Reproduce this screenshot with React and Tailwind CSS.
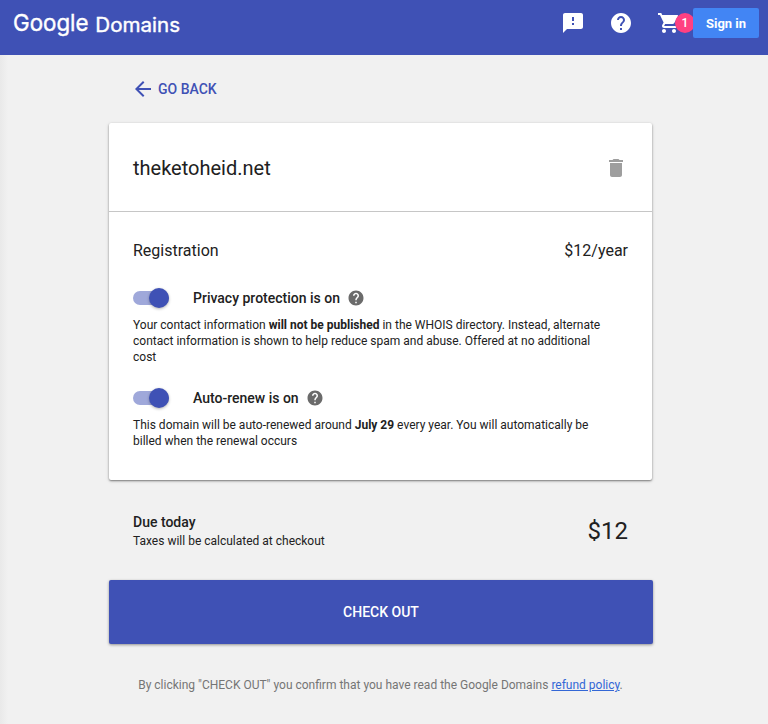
import React from "react";
import { MdArrowBack, MdDelete, MdFeedback, MdHelp, MdShoppingCart } from "react-icons/md";

function Logo() {
  return (
    <svg width="184" height="55" className="block fill-white" aria-label="Google Domains">
      <g fontFamily="Inter, sans-serif" stroke="white" strokeWidth="0.4">
        <text x="13" y="31" fontSize="23.5" textLength="75.5" lengthAdjust="spacingAndGlyphs">Google</text>
        <text x="95.3" y="31.8" fontSize="20" textLength="84.7" lengthAdjust="spacingAndGlyphs">Domains</text>
      </g>
    </svg>
  );
}

function Header() {
  return (
    <header className="flex h-[55px] items-start bg-[#3f51b5] text-white">
      <Logo />
      <div className="ml-auto flex h-[46px] items-center pr-[9px]">
        <MdFeedback size={24} />
        <MdHelp size={24} className="ml-6" />
        <div className="relative ml-6 mr-3 h-6 w-6">
          <MdShoppingCart size={24} />
          <span className="absolute left-[18px] top-[2px] flex h-5 w-5 items-center justify-center rounded-full bg-[#ff4081] text-[12px] font-medium">
            1
          </span>
        </div>
        <button className="relative h-[30px] w-[66px] rounded-[2px] bg-[#4285f4] pt-px text-[13px] font-bold">
          Sign in
        </button>
      </div>
    </header>
  );
}

function Setting({ title, children }) {
  return (
    <section>
      <div className="flex h-5 items-center">
        <div className="flex h-[14px] w-9 items-center justify-end rounded-full bg-[#9fa8da]">
          <span className="h-5 w-5 shrink-0 rounded-full bg-[#3f51b5] shadow-[0_1px_3px_rgba(0,0,0,0.3)]" />
        </div>
        <h2 className="ml-6 text-[14px] font-medium leading-5">{title}</h2>
        <MdHelp size={18} className="ml-[7.5px] text-[#6b6b6b]" />
      </div>
      <p className="mt-[9px] text-[12px] leading-4">{children}</p>
    </section>
  );
}

export default function App() {
  return (
    <div className="h-[724px] w-[768px] overflow-hidden bg-[#f1f1f1] font-[Roboto,sans-serif] text-[#212121]">
      <Header />
      <main className="h-[669px] bg-[linear-gradient(to_right,#e9e9e9,#f1f1f1_8px)] pl-[109px]">
        <div className="flex h-[68px] items-center pl-[22px] text-[#3f51b5]">
          <MdArrowBack size={24} />
          <span className="ml-[3px] text-[14px] font-medium">GO BACK</span>
        </div>

        <div className="h-[357px] w-[543px] rounded-[2px] bg-white shadow-[0_1px_2px_rgba(0,0,0,0.45),0_1px_4px_rgba(0,0,0,0.12)]">
          <div className="flex h-[89px] items-center justify-between border-b border-[#c6c6c6] pl-6 pr-[24px] pt-[2px]">
            <h1 className="text-[20px]">theketoheid.net</h1>
            <MdDelete size={24} className="text-[#9e9e9e]" />
          </div>
          <div className="px-6 pt-[27px]">
            <div className="flex h-6 items-center justify-between text-[16px]">
              <span>Registration</span>
              <span>$12/year</span>
            </div>
            <div className="mt-[25px] flex flex-col gap-[23px]">
              <Setting title="Privacy protection is on">
                Your contact information <b>will not be published</b> in the WHOIS directory. Instead, alternate
                <br />
                contact information is shown to help reduce spam and abuse. Offered at no additional
                <br />
                cost
              </Setting>
              <Setting title="Auto-renew is on">
                This domain will be auto-renewed around <b>July 29</b> every year. You will automatically be
                <br />
                billed when the renewal occurs
              </Setting>
            </div>
          </div>
        </div>

        <div className="flex h-[100px] w-[543px] items-center justify-between px-6 pt-px">
          <div>
            <div className="text-[14px] font-medium leading-5">Due today</div>
            <div className="text-[12px] leading-[18px]">Taxes will be calculated at checkout</div>
          </div>
          <div className="pt-px text-[24px]">$12</div>
        </div>

        <button className="block h-16 w-[544px] rounded-[2px] bg-[#3f51b5] text-[14px] font-medium text-white shadow-[0_1px_3px_rgba(0,0,0,0.4)]">
          CHECK OUT
        </button>

        <p className="mt-[33px] w-[543px] text-center text-[12px] leading-4 text-[#757575]">
          By clicking "CHECK OUT" you confirm that you have read the Google Domains{" "}
          <a className="text-[#3367d6] underline">refund policy</a>.
        </p>
      </main>
    </div>
  );
}
